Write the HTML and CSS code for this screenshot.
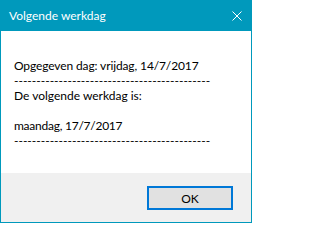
FILE: index.html
```
<!DOCTYPE html>
<html lang="nl">
<head>
<meta charset="utf-8">
<title>Volgende werkdag</title>
<link rel="stylesheet" href="styles.css">
</head>
<body>
<div class="window">
  <div class="titlebar">
    <span class="title">Volgende werkdag</span>
    <svg class="close" width="10" height="10" viewBox="0 0 10 10"><path d="M0.5 0.5L9.5 9.5M9.5 0.5L0.5 9.5" stroke="#fff" stroke-width="1" fill="none"/></svg>
  </div>
  <div class="content">
    <div class="line tight">Opgegeven dag: vrijdag, 14/7/2017</div>
    <div class="line">--------------------------------------------</div>
    <div class="line">De volgende werkdag is:</div>
    <div class="line">&nbsp;</div>
    <div class="line tighter">maandag, 17/7/2017</div>
    <div class="line">--------------------------------------------</div>
  </div>
  <div class="footer">
    <button class="ok">OK</button>
  </div>
</div>
</body>
</html>
```
FILE: styles.css
```
html, body {
  margin: 0;
  padding: 0;
  background: #fff;
}
body {
  font-family: Lato, "Noto Sans", sans-serif;
  font-size: 12px;
  color: #000;
}
.window {
  width: 252px;
  height: 223px;
  box-sizing: border-box;
  border: 1px solid #0099bc;
  border-top: none;
  display: flex;
  flex-direction: column;
}
.titlebar {
  height: 31px;
  background: #0099bc;
  display: flex;
  align-items: center;
  justify-content: space-between;
  padding: 0 10px 0 9px;
  margin: 0 -1px;
  color: #fff;
}
.title {
  line-height: 31px;
}
.close {
  display: block;
}
.content {
  flex: 1;
  padding: 27px 0 0 13px;
  background: #fff;
}
.line {
  line-height: 15px;
  height: 15px;
  white-space: nowrap;
}
.tight {
  letter-spacing: -0.12px;
}
.tighter {
  letter-spacing: -0.25px;
}
.footer {
  height: 49px;
  background: #f0f0f0;
  box-sizing: border-box;
  padding: 13px 18px 0 0;
  display: flex;
  justify-content: flex-end;
  align-items: flex-start;
}
.ok {
  width: 86px;
  height: 24px;
  box-sizing: border-box;
  border: 2px solid #0078d7;
  background: #e1e1e1;
  font-family: Lato, "Noto Sans", sans-serif;
  font-size: 12px;
  color: #000;
  padding: 0;
  margin: 0;
  border-radius: 0;
}
```
